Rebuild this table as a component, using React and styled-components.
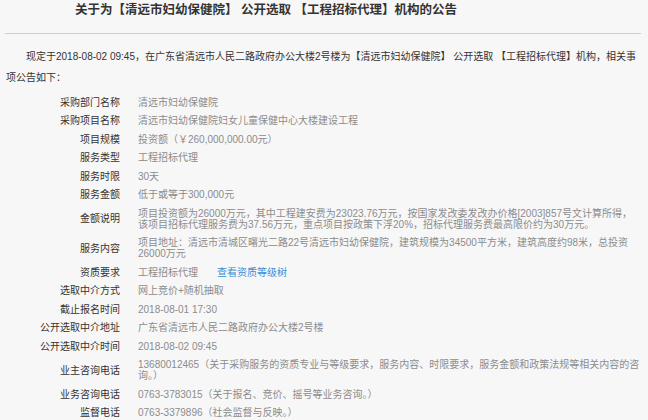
import React from "react";
import styled, { createGlobalStyle } from "styled-components";

const GlobalStyle = createGlobalStyle`
  html, body {
    margin: 0;
    padding: 0;
    background: #f7f7f7;
  }
  body {
    font-family: "Liberation Sans", "Noto Sans CJK SC", sans-serif;
  }
`;

const rows = [
  { label: "采购部门名称", value: "清远市妇幼保健院" },
  { label: "采购项目名称", value: "清远市妇幼保健院妇女儿童保健中心大楼建设工程" },
  { label: "项目规模", value: "投资额（￥260,000,000.00元）" },
  { label: "服务类型", value: "工程招标代理" },
  { label: "服务时限", value: "30天" },
  { label: "服务金额", value: "低于或等于300,000元" },
  {
    label: "金额说明",
    value:
      "项目投资额为26000万元，其中工程建安费为23023.76万元，按国家发改委发改办价格[2003]857号文计算所得，该项目招标代理服务费为37.56万元，重点项目按政策下浮20%，招标代理服务费最高限价约为30万元。",
  },
  {
    label: "服务内容",
    value:
      "项目地址：清远市清城区曙光二路22号清远市妇幼保健院，建筑规模为34500平方米，建筑高度约98米，总投资26000万元",
  },
  { label: "资质要求", value: "工程招标代理", link: "查看资质等级树" },
  { label: "选取中介方式", value: "网上竞价+随机抽取" },
  { label: "截止报名时间", value: "2018-08-01 17:30" },
  { label: "公开选取中介地址", value: "广东省清远市人民二路政府办公大楼2号楼" },
  { label: "公开选取中介时间", value: "2018-08-02 09:45" },
  {
    label: "业主咨询电话",
    value:
      "13680012465（关于采购服务的资质专业与等级要求，服务内容、时限要求，服务金额和政策法规等相关内容的咨询。）",
  },
  { label: "业务咨询电话", value: "0763-3783015（关于报名、竞价、摇号等业务咨询。）" },
  { label: "监督电话", value: "0763-3379896（社会监督与反映。）" },
];

const App = () => {
  return (
    <Page>
      <GlobalStyle />
      <Title>关于为【清远市妇幼保健院】 公开选取 【工程招标代理】机构的公告</Title>
      <Rule />
      <Intro>
        现定于2018-08-02 09:45，在广东省清远市人民二路政府办公大楼2号楼为【清远市妇幼保健院】
        公开选取 【工程招标代理】机构，相关事项公告如下：
      </Intro>
      <InfoList>
        {rows.map((row) => (
          <Row key={row.label}>
            <Label>{row.label}</Label>
            <Value>
              {row.value}
              {row.link && <QualLink href="#">{row.link}</QualLink>}
            </Value>
          </Row>
        ))}
      </InfoList>
    </Page>
  );
};

const Page = styled.div`
  padding: 0 7px 0 5px;
  color: #333;
`;

const Title = styled.h1`
  margin: 0;
  padding: 0 0 0 70px;
  height: 20px;
  line-height: 20px;
  font-size: 12.5px;
  font-weight: bold;
  color: #333;
  white-space: nowrap;
`;

const Rule = styled.div`
  margin-top: 13px;
  height: 1px;
  background: #b2ded0;
`;

const Intro = styled.p`
  margin: 12px 0 0;
  padding-left: 1px;
  font-size: 10px;
  line-height: 21px;
  text-indent: 2em;
  color: #333;
`;

const InfoList = styled.div`
  margin-top: 5px;
  display: flex;
  flex-direction: column;
`;

const Row = styled.div`
  display: flex;
  align-items: center;
  padding: 3.75px 0;
  font-size: 10px;
  line-height: 11px;
`;

const Label = styled.div`
  flex: 0 0 115px;
  text-align: right;
  color: #333;
  white-space: nowrap;
`;

const Value = styled.div`
  flex: 1;
  margin: 0 1.5px 0 18px;
  color: #8c8c8c;
`;

const QualLink = styled.a`
  margin-left: 19px;
  color: #3c8dd6;
  text-decoration: none;
`;

export default App;
